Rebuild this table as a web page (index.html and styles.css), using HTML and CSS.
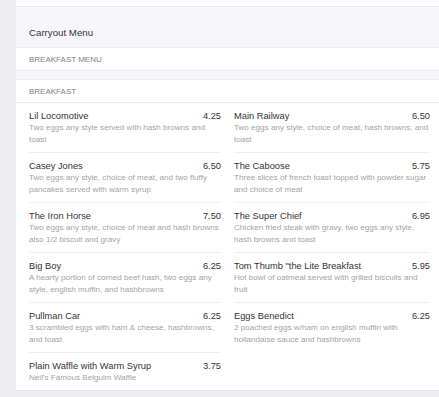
FILE: index.html
```html
<!DOCTYPE html>
<html lang="en">
<head>
    <meta charset="utf-8">
    <title>Carryout Menu</title>
    <link rel="stylesheet" href="styles.css">
</head>
<body>
    <div class="page">
        <div class="top-strip"></div>

        <div class="card">
            <div class="card-header">Carryout Menu</div>
            <div class="section-title">Breakfast Menu</div>
            <div class="section-gap"></div>
            <div class="section-title">Breakfast</div>

            <div class="menu-items">
                <div class="item">
                    <div class="item-head"><span>Lil Locomotive</span><span>4.25</span></div>
                    <p class="item-desc">Two eggs any style served with hash browns and toast</p>
                </div>
                <div class="item">
                    <div class="item-head"><span>Main Railway</span><span>6.50</span></div>
                    <p class="item-desc">Two eggs any style, choice of meat, hash browns, and toast</p>
                </div>
                <div class="item">
                    <div class="item-head"><span>Casey Jones</span><span>6.50</span></div>
                    <p class="item-desc">Two eggs any style, choice of meat, and two fluffy pancakes served with warm syrup</p>
                </div>
                <div class="item">
                    <div class="item-head"><span>The Caboose</span><span>5.75</span></div>
                    <p class="item-desc">Three slices of french toast topped with powder sugar and choice of meat</p>
                </div>
                <div class="item">
                    <div class="item-head"><span>The Iron Horse</span><span>7.50</span></div>
                    <p class="item-desc">Two eggs any style, choice of meat and hash browns also 1/2 biscuit and gravy</p>
                </div>
                <div class="item">
                    <div class="item-head"><span>The Super Chief</span><span>6.95</span></div>
                    <p class="item-desc">Chicken fried steak with gravy, two eggs any style, hash browns and toast</p>
                </div>
                <div class="item">
                    <div class="item-head"><span>Big Boy</span><span>6.25</span></div>
                    <p class="item-desc">A hearty portion of corned beef hash, two eggs any style, english muffin, and hashbrowns</p>
                </div>
                <div class="item">
                    <div class="item-head"><span>Tom Thumb "the Lite Breakfast</span><span>5.95</span></div>
                    <p class="item-desc">Hot bowl of oatmeal served with grilled biscuits and fruit</p>
                </div>
                <div class="item">
                    <div class="item-head"><span>Pullman Car</span><span>6.25</span></div>
                    <p class="item-desc">3 scrambled eggs with ham &amp; cheese, hashbrowns, and toast</p>
                </div>
                <div class="item">
                    <div class="item-head"><span>Eggs Benedict</span><span>6.25</span></div>
                    <p class="item-desc">2 poached eggs w/ham on english muffin with hollandaise sauce and hashbrowns</p>
                </div>
                <div class="item">
                    <div class="item-head"><span>Plain Waffle with Warm Syrup</span><span>3.75</span></div>
                    <p class="item-desc">Neil's Famous Belguim Waffle</p>
                </div>
            </div>
        </div>
    </div>
</body>
</html>
```

FILE: styles.css
```css
* {
    margin: 0;
    padding: 0;
    box-sizing: border-box;
}

body {
    font-family: 'Liberation Sans', Arial, sans-serif;
    background: #eeeef2;
    color: #333;
    height: 397px;
    overflow: hidden;
}

.page {
    margin-left: 16px;
}

.top-strip {
    height: 7px;
    background: #fff;
    border-bottom: 1px solid #ebebee;
}

.card {
    background: #fff;
    border-bottom: 1px solid #e6e6ea;
}

.card-header {
    background: #f7f7f9;
    padding: 20px 13px 8px;
    height: 41px;
    font-size: 9.7px;
    line-height: 12px;
    color: #333;
    border-bottom: 1px solid #ececef;
}

.section-title {
    height: 23px;
    padding: 6px 13px 4px;
    font-size: 8px;
    line-height: 12px;
    text-transform: uppercase;
    color: #808080;
    border-bottom: 1px solid #ececef;
}

.section-gap {
    height: 9px;
    background: #f6f6f8;
    border-bottom: 1px solid #ececef;
}

.menu-items {
    display: grid;
    grid-template-columns: 192px 1fr;
    column-gap: 13px;
    padding: 0 9px 0 13px;
}

.item {
    padding: 7px 0 6px;
    border-top: 1px solid #efeff1;
}

.item:nth-child(1),
.item:nth-child(2) {
    border-top: none;
}

.item-head {
    display: flex;
    justify-content: space-between;
    font-size: 9.3px;
    line-height: 12px;
    color: #333;
}

.item-desc {
    font-size: 8.1px;
    line-height: 12px;
    color: #a3a3a3;
}
```
